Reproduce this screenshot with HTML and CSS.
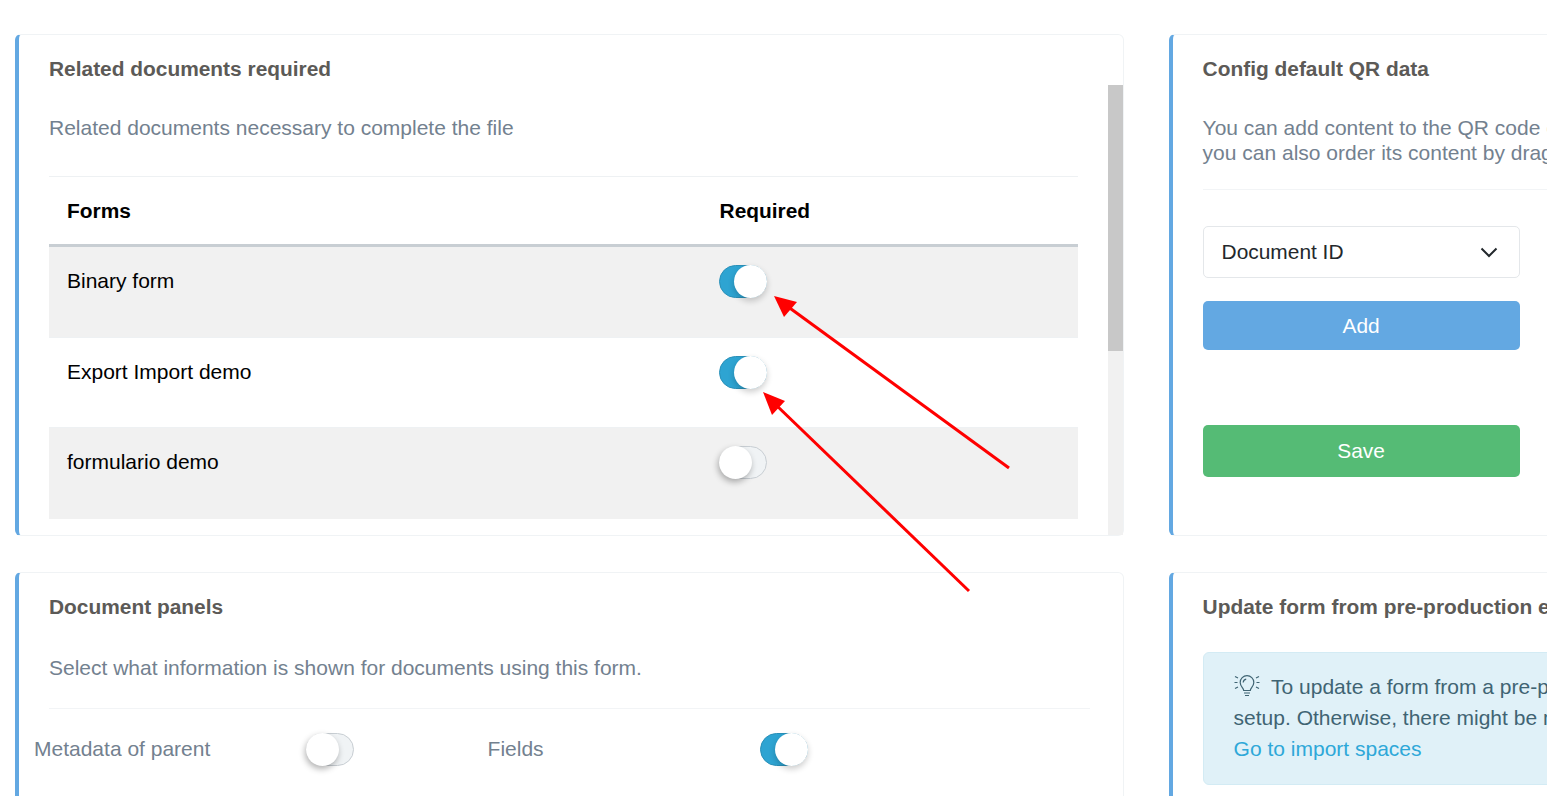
FILE: index.html
```html
<!DOCTYPE html>
<html lang="en">
<head>
    <meta charset="UTF-8">
    <title>Form settings</title>
    <link rel="stylesheet" href="styles.css">
</head>
<body>
    <div class="page">
        <div class="column column-left">
            <section class="card card-docs">
                <h3 class="card-title">Related documents required</h3>
                <div class="scroll-wrap">
                    <div class="scroll-body">
                        <p class="card-desc">Related documents necessary to complete the file</p>
                        <table class="forms-table">
                            <thead>
                                <tr><th class="col-name">Forms</th><th>Required</th></tr>
                            </thead>
                            <tbody>
                                <tr>
                                    <td>Binary form</td>
                                    <td><span class="switch on"><span class="knob"></span></span></td>
                                </tr>
                                <tr>
                                    <td>Export Import demo</td>
                                    <td><span class="switch on"><span class="knob"></span></span></td>
                                </tr>
                                <tr>
                                    <td>formulario demo</td>
                                    <td><span class="switch"><span class="knob"></span></span></td>
                                </tr>
                            </tbody>
                        </table>
                    </div>
                    <div class="scrollbar"><div class="scrollbar-thumb"></div></div>
                </div>
            </section>
            <section class="card card-panels">
                <h3 class="card-title">Document panels</h3>
                <p class="card-desc panels-desc">Select what information is shown for documents using this form.</p>
                <hr class="divider panels-divider">
                <div class="panel-options">
                    <div class="panel-option">
                        <span class="panel-label">Metadata of parent</span>
                        <span class="switch"><span class="knob"></span></span>
                    </div>
                    <div class="panel-option">
                        <span class="panel-label">Fields</span>
                        <span class="switch on"><span class="knob"></span></span>
                    </div>
                </div>
            </section>
        </div>
        <div class="column column-right">
            <section class="card card-qr">
                <h3 class="card-title">Config default QR data</h3>
                <p class="card-desc qr-desc">You can add content to the QR code of the document,<br>you can also order its content by dragging the items.</p>
                <hr class="divider qr-divider">
                <div class="qr-form">
                    <div class="select-box">
                        <span class="select-value">Document ID</span>
                        <svg class="chevron" width="18" height="11" viewBox="0 0 18 11"><path d="M1.500 1.500 9 9l7.500-7.500" fill="none" stroke="#23282c" stroke-width="2"/></svg>
                    </div>
                    <button class="btn btn-add">Add</button>
                    <button class="btn btn-save">Save</button>
                </div>
            </section>
            <section class="card card-update">
                <h3 class="card-title">Update form from pre-production environment</h3>
                <div class="info-box">
                    <svg class="bulb" width="26" height="22" viewBox="0 0 26 22" fill="none" stroke="#3f6473" stroke-width="1.200">
                        <path d="M9.700 15.500c0-2.200-3.500-4-3.500-8a6.800 6.800 0 0 1 13.600 0c0 4-3.500 5.800-3.500 8z"/>
                        <path d="M10 18h6M11 20.500h4"/>
                        <path d="M9.200 7.500c.1-1.700 1.300-3 3-3.300"/>
                        <path d="M1 1.500l3 1.500M.5 7.500h3M1 13.500l3-1.500M25 1.500 22 3M25.500 7.500h-3M25 13.500 22 12"/>
                    </svg>
                    <span>To update a form from a pre-production environment, follow the recommended</span><br>
                    <span>setup. Otherwise, there might be mismatches between the spaces.</span><br>
                    <a class="info-link" href="#">Go to import spaces</a>
                </div>
            </section>
        </div>
        <svg class="arrows" width="1547" height="796" viewBox="0 0 1547 796">
            <g stroke="#ff0000" stroke-width="3" fill="#ff0000">
                <line x1="1009" y1="468" x2="787" y2="306"/>
                <path d="M774 296 797 302 784 317z" stroke="none"/>
                <line x1="969" y1="591" x2="775" y2="404"/>
                <path d="M763 392 785 401 772 415z" stroke="none"/>
            </g>
        </svg>
    </div>
</body>
</html>
```

FILE: styles.css
```css
html, body {
    height: 100%;
    margin: 0;
    padding: 0;
    overflow: hidden;
    background: #fff;
    font-family: "Liberation Sans", Arial, sans-serif;
    font-size: 21px;
    line-height: 25px;
}
.page {
    position: relative;
    display: flex;
    gap: 44.6px;
    width: 1547px;
    height: 796px;
    padding: 34px 0 0 15px;
    box-sizing: border-box;
    overflow: hidden;
}
.column {
    display: flex;
    flex-direction: column;
    gap: 36px;
    flex: none;
}
.column-left {
    width: 1109px;
}
.column-right {
    width: 560px;
}
.card {
    flex: none;
    background: #fff;
    border: 1px solid #f0f3f5;
    border-left: 4px solid #63a8e2;
    border-radius: 6px;
    box-sizing: border-box;
}
.card-docs, .card-qr {
    height: 502px;
}
.card-panels, .card-update {
    height: 300px;
}
.card-title {
    margin: 0;
    padding: 21px 0 0 30px;
    font-size: 20.9px;
    line-height: 25px;
    font-weight: bold;
    color: #5c5a57;
}
.card-desc {
    margin: 0;
    color: #73818f;
}
/* related documents */
.scroll-wrap {
    display: flex;
    height: 450px;
    margin-top: 4px;
}
.scroll-body {
    flex: 1;
    padding: 30px 30px 0 30px;
}
.scrollbar {
    width: 15px;
    flex: none;
    background: #f1f1f1;
}
.scrollbar-thumb {
    height: 266px;
    background: #c8c8c8;
}
.forms-table {
    width: 100%;
    margin-top: 36px;
    border-collapse: collapse;
    color: #000;
}
.forms-table th {
    height: 69px;
    padding: 0 18px 1px 18px;
    text-align: left;
    font-size: 20.9px;
    font-weight: bold;
    border-top: 1px solid #eef1f3;
    border-bottom: 3px solid #c8ced3;
    box-sizing: border-box;
}
.forms-table .col-name {
    width: 652.6px;
    box-sizing: border-box;
}
.forms-table td {
    height: 90px;
    padding: 21px 18px 0 18px;
    vertical-align: top;
    box-sizing: border-box;
    border-top: 1px solid #eef1f3;
}
.forms-table tbody tr:nth-child(odd) {
    background: #f1f1f1;
}
.forms-table tbody tr:first-child td {
    border-top: 0;
    height: 92px;
}
.forms-table tbody tr:last-child td {
    height: 91px;
}
/* toggle */
.switch {
    display: inline-block;
    position: relative;
    width: 48px;
    height: 33px;
    border-radius: 17px;
    box-sizing: border-box;
    border: 1px solid #c8ced3;
    background: #f0f3f5;
    vertical-align: top;
}
.forms-table .switch {
    margin: -3px 0 0 -1px;
}
.switch.on {
    background: #2ea4d2;
    border-color: #2a90b8;
}
.knob {
    position: absolute;
    top: -1px;
    left: -1px;
    width: 33px;
    height: 33px;
    border-radius: 50%;
    background: #fff;
    box-shadow: -1px 3px 6px rgba(0, 0, 0, 0.3);
}
.switch.on .knob {
    left: 14px;
    box-shadow: 0 3px 6px rgba(0, 0, 0, 0.2);
}
/* panels */
.panels-desc {
    padding: 36px 0 0 30px;
}
.divider {
    border: 0;
    border-top: 1px solid #f2f4f6;
    margin: 0;
}
.panels-divider {
    margin: 28px 33px 0 30px;
}
.panel-options {
    display: flex;
    padding: 24px 0 0 15px;
}
.panel-option {
    display: flex;
    align-items: center;
    width: 453.6px;
    flex: none;
    color: #73818f;
}
.panel-label {
    width: 272px;
    flex: none;
    padding-bottom: 2px;
}
/* qr */
.qr-desc {
    padding: 34px 0 0 30px;
    white-space: nowrap;
}
.qr-divider {
    margin: 24px 0 0 30px;
}
.qr-form {
    display: flex;
    flex-direction: column;
    width: 317px;
    padding: 36px 0 0 30px;
}
.select-box {
    display: flex;
    align-items: center;
    justify-content: space-between;
    height: 52px;
    padding: 0 21px 0 18px;
    box-sizing: border-box;
    border: 1px solid #e4e7ea;
    border-radius: 5px;
    color: #23282c;
}
.select-value {
    font-size: 20.9px;
    padding-bottom: 2px;
}
.btn {
    display: block;
    width: 100%;
    border: 0;
    border-radius: 5px;
    color: #fff;
    font-family: inherit;
    font-size: 20.9px;
    line-height: 25px;
}
.btn-add {
    height: 49px;
    margin-top: 23px;
    background: #63a8e2;
}
.btn-save {
    height: 52px;
    margin-top: 75px;
    padding-bottom: 3px;
    background: #55bb75;
}
/* update */
.info-box {
    margin: 33px 0 0 30px;
    width: 560px;
    height: 133px;
    padding: 18px 30px 0 30px;
    box-sizing: border-box;
    background: #e0f1f8;
    border: 1px solid #d3ebf4;
    border-radius: 6px;
    color: #3f6473;
    line-height: 31px;
    white-space: nowrap;
}
.bulb {
    vertical-align: -3px;
    margin-right: 6px;
}
.info-link {
    color: #2ea8d8;
    text-decoration: none;
}
.arrows {
    position: absolute;
    top: 0;
    left: 0;
    pointer-events: none;
}
```
